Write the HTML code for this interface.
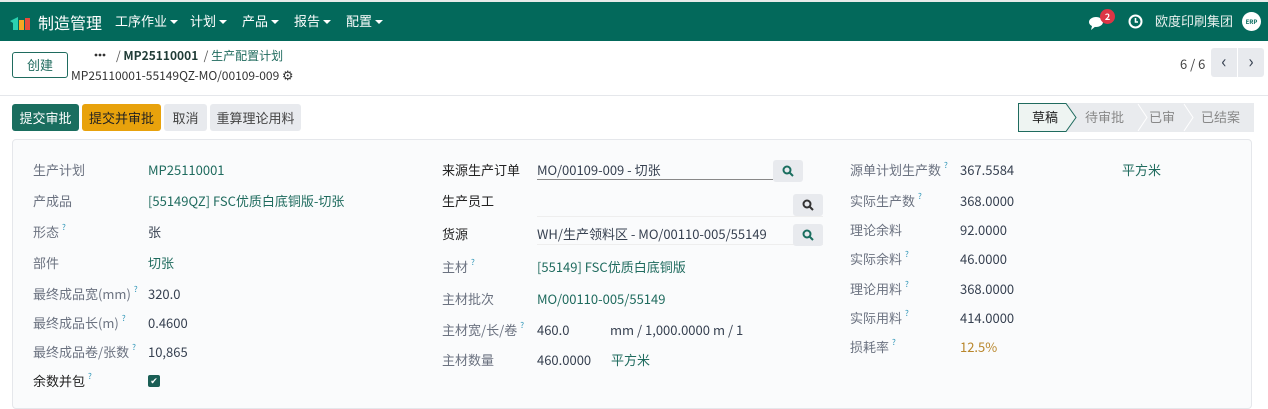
<!DOCTYPE html>
<html><head><meta charset="utf-8"><style>
*{box-sizing:border-box;margin:0;padding:0}
body{width:1268px;height:400px;overflow:hidden;background:#fff;font-family:"Noto Sans CJK SC","Liberation Sans",sans-serif;font-size:13px;color:#374151;position:relative}
.nav{position:absolute;left:0;top:0;width:1268px;height:41px;background:#03695b;border-top:2px solid #e7eae9;color:#fff}
.a{position:absolute;white-space:nowrap;line-height:18px}
.caret{display:inline-block;border-left:4px solid transparent;border-right:4px solid transparent;border-top:4px solid #fff;vertical-align:middle;margin-left:3px}
.btn{position:absolute;height:27px;line-height:27px;text-align:center;border-radius:3px;font-size:13px}
.lbl{color:#6b7280}
.lk{color:#1f6b5e}
.q{color:#2a93b6;font-size:8px;vertical-align:top;margin-left:3px;line-height:10px}
.sb{position:absolute;width:30px;height:22px;background:#e8eaee;border-radius:3px}
</style></head><body>
<div class="nav">
 <svg class="a" style="left:10px;top:13px" width="22" height="15"><path d="M0 6 L8 2 L8 15 L3 15 L3 8 Z" fill="#2bd1b0"/><rect x="9" y="5" width="5" height="10" fill="#f5a623"/><rect x="15" y="3" width="5" height="12" fill="#e74c3c"/></svg>
 <div class="a" style="left:38px;top:10px;font-size:16px;line-height:20px">制造管理</div>
 <div class="a" style="left:115px;top:10px">工序作业<span class="caret"></span></div>
 <div class="a" style="left:190px;top:10px">计划<span class="caret"></span></div>
 <div class="a" style="left:242px;top:10px">产品<span class="caret"></span></div>
 <div class="a" style="left:294px;top:10px">报告<span class="caret"></span></div>
 <div class="a" style="left:346px;top:10px">配置<span class="caret"></span></div>
 <svg class="a" style="left:1089px;top:14px" width="16" height="14"><ellipse cx="7" cy="6" rx="7" ry="5" fill="#fff"/><path d="M3 10 L2 14 L7 10Z" fill="#fff"/></svg>
 <div class="a" style="left:1100px;top:7px;width:15px;height:15px;border-radius:50%;background:#dc3545;font-size:9px;text-align:center;line-height:15px;font-weight:bold">2</div>
 <svg class="a" style="left:1128px;top:12px" width="15" height="15"><circle cx="7.5" cy="7.5" r="6" fill="none" stroke="#fff" stroke-width="2"/><path d="M7.5 4 V8 H10" stroke="#fff" stroke-width="1.6" fill="none"/></svg>
 <div class="a" style="left:1155px;top:10px;color:#e8f0ee">欧度印刷集团</div>
 <div class="a" style="left:1242px;top:10px;width:19px;height:19px;border-radius:50%;background:#fff;color:#03695b;font-size:6px;text-align:center;line-height:19px;font-weight:bold">ERP</div>
</div>
<div class="btn" style="left:12px;top:52px;width:56px;border:1px solid #1f6b5e;color:#1f6b5e;height:26px;line-height:24px">创建</div>
<svg class="a" style="left:93px;top:48px" width="14" height="14"><circle cx="3" cy="7" r="1.4" fill="#333"/><circle cx="7" cy="7" r="1.4" fill="#333"/><circle cx="11" cy="7" r="1.4" fill="#333"/></svg>
<div class="a" style="left:116px;top:47px;font-size:12px;color:#555">/ <b style="color:#1f3b36">MP25110001</b> &nbsp;/ <span style="color:#1f6b5e">生产配置计划</span></div>
<div class="a" style="left:71px;top:66px;font-size:12px;color:#333">MP25110001-55149QZ-MO/00109-009 <span style="font-size:13px">⚙</span></div>
<div class="a" style="left:1180px;top:55px;color:#444">6 / 6</div>
<div class="btn" style="left:1211px;top:48px;width:26px;height:29px;background:#e8eaee;border-radius:3px 0 0 3px;line-height:27px;font-size:18px">‹</div>
<div class="btn" style="left:1238px;top:48px;width:26px;height:29px;background:#e8eaee;border-radius:0 3px 3px 0;line-height:27px;font-size:18px">›</div>
<div class="a" style="left:0;top:95px;width:1268px;border-top:1px solid #e5e7eb"></div>
<div class="btn" style="left:12px;top:104px;width:67px;background:#1a6e5f;color:#fff">提交审批</div>
<div class="btn" style="left:82px;top:104px;width:79px;background:#e8a20c;color:#222">提交并审批</div>
<div class="btn" style="left:164px;top:104px;width:43px;background:#e8eaee;color:#444">取消</div>
<div class="btn" style="left:210px;top:104px;width:91px;background:#e8eaee;color:#444">重算理论用料</div>
<svg class="a" style="left:1018px;top:103px" width="236" height="29">
 <rect x="0" y="0" width="236" height="29" fill="#e9ebee"/>
 <path d="M0.5 0.5 H48 L58 14.5 L48 28.5 H0.5 Z" fill="#eef4f2" stroke="#1f6b5e"/>
 <path d="M120 1 L129 14.5 L120 28 M166 1 L175 14.5 L166 28" stroke="#fff" fill="none"/>
 <text x="14" y="19" font-size="13" fill="#222" font-family="Noto Sans CJK SC,sans-serif">草稿</text>
 <text x="67" y="19" font-size="13" fill="#888" font-family="Noto Sans CJK SC,sans-serif">待审批</text>
 <text x="131" y="19" font-size="13" fill="#888" font-family="Noto Sans CJK SC,sans-serif">已审</text>
 <text x="183" y="19" font-size="13" fill="#888" font-family="Noto Sans CJK SC,sans-serif">已结案</text>
</svg>
<div class="a" style="left:12px;top:139px;width:1240px;height:270px;border:1px solid #e5e7eb;border-radius:4px;background:#fafbfc"></div>
<!-- col1 -->
<div class="a lbl" style="left:33px;top:161px">生产计划</div><div class="a lk" style="left:148px;top:161px">MP25110001</div>
<div class="a lbl" style="left:33px;top:192px">产成品</div><div class="a lk" style="left:148px;top:192px">[55149QZ] FSC优质白底铜版-切张</div>
<div class="a lbl" style="left:33px;top:223px">形态<span class="q">?</span></div><div class="a" style="left:148px;top:223px">张</div>
<div class="a lbl" style="left:33px;top:254px">部件</div><div class="a lk" style="left:148px;top:254px">切张</div>
<div class="a lbl" style="left:33px;top:285px">最终成品宽(mm)<span class="q">?</span></div><div class="a" style="left:148px;top:285px">320.0</div>
<div class="a lbl" style="left:33px;top:314px">最终成品长(m)<span class="q">?</span></div><div class="a" style="left:148px;top:314px">0.4600</div>
<div class="a lbl" style="left:33px;top:343px">最终成品卷/张数<span class="q">?</span></div><div class="a" style="left:148px;top:343px">10,865</div>
<div class="a" style="left:33px;top:372px;color:#222">余数并包<span class="q">?</span></div>
<div class="a" style="left:148px;top:375px;width:12px;height:12px;background:#1a5e55;border-radius:2px;color:#fff;font-size:9px;text-align:center;line-height:12px">✔</div>
<!-- col2 -->
<div class="a" style="left:442px;top:161px;color:#222">来源生产订单</div><div class="a" style="left:537px;top:161px">MO/00109-009 - 切张</div>
<div class="a" style="left:537px;top:179px;width:236px;border-top:1px solid #888"></div>
<div class="sb" style="left:773px;top:160px"></div><svg class="a" style="left:782px;top:165px" width="12" height="12"><circle cx="5" cy="5" r="3.5" stroke="#1a6e5f" stroke-width="2" fill="none"/><path d="M7.5 7.5 L11 11" stroke="#1a6e5f" stroke-width="2"/></svg>
<div class="a" style="left:442px;top:192px;color:#222">生产员工</div>
<div class="a" style="left:537px;top:216px;width:286px;border-top:1px solid #eee"></div>
<div class="sb" style="left:793px;top:194px"></div><svg class="a" style="left:802px;top:199px" width="12" height="12"><circle cx="5" cy="5" r="3.5" stroke="#333" stroke-width="2" fill="none"/><path d="M7.5 7.5 L11 11" stroke="#333" stroke-width="2"/></svg>
<div class="a" style="left:442px;top:225px;color:#222">货源</div><div class="a" style="left:537px;top:225px">WH/生产领料区 - MO/00110-005/55149</div>
<div class="a" style="left:537px;top:244px;width:286px;border-top:1px solid #eee"></div>
<div class="sb" style="left:793px;top:224px"></div><svg class="a" style="left:802px;top:229px" width="12" height="12"><circle cx="5" cy="5" r="3.5" stroke="#1a6e5f" stroke-width="2" fill="none"/><path d="M7.5 7.5 L11 11" stroke="#1a6e5f" stroke-width="2"/></svg>
<div class="a lbl" style="left:442px;top:258px">主材<span class="q">?</span></div><div class="a lk" style="left:537px;top:258px">[55149] FSC优质白底铜版</div>
<div class="a lbl" style="left:442px;top:290px">主材批次</div><div class="a lk" style="left:537px;top:290px">MO/00110-005/55149</div>
<div class="a lbl" style="left:442px;top:321px">主材宽/长/卷<span class="q">?</span></div><div class="a" style="left:537px;top:321px">460.0</div><div class="a" style="left:610px;top:321px">mm / 1,000.0000</div><div class="a" style="left:713px;top:321px">m / 1</div>
<div class="a lbl" style="left:442px;top:351px">主材数量</div><div class="a" style="left:537px;top:351px">460.0000</div><div class="a lk" style="left:611px;top:351px">平方米</div>
<!-- col3 -->
<div class="a lbl" style="left:850px;top:161px">源单计划生产数<span class="q">?</span></div><div class="a" style="left:960px;top:161px">367.5584</div><div class="a lk" style="left:1122px;top:161px">平方米</div>
<div class="a lbl" style="left:850px;top:192px">实际生产数<span class="q">?</span></div><div class="a" style="left:960px;top:192px">368.0000</div>
<div class="a lbl" style="left:850px;top:221px">理论余料</div><div class="a" style="left:960px;top:221px">92.0000</div>
<div class="a lbl" style="left:850px;top:250px">实际余料<span class="q">?</span></div><div class="a" style="left:960px;top:250px">46.0000</div>
<div class="a lbl" style="left:850px;top:280px">理论用料<span class="q">?</span></div><div class="a" style="left:960px;top:280px">368.0000</div>
<div class="a lbl" style="left:850px;top:309px">实际用料<span class="q">?</span></div><div class="a" style="left:960px;top:309px">414.0000</div>
<div class="a lbl" style="left:850px;top:338px">损耗率<span class="q">?</span></div><div class="a" style="left:960px;top:338px;color:#b8862b">12.5%</div>
</body></html>
